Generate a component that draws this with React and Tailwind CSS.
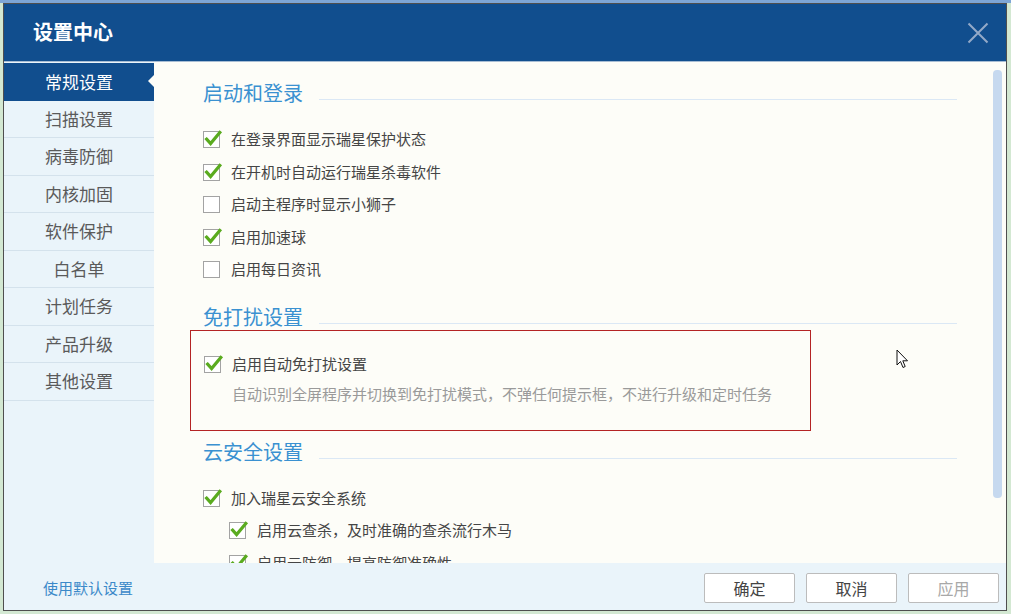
import React from "react"

const navItems = ["常规设置", "扫描设置", "病毒防御", "内核加固", "软件保护", "白名单", "计划任务", "产品升级", "其他设置"]

const CheckBox = ({ checked }) => (
    <svg width="20" height="20" viewBox="0 0 20 20" className="shrink-0 overflow-visible">
        <rect x="0.5" y="2.5" width="16" height="16" fill="#ffffff" stroke="#a3a3a3" />
        {checked && (
            <path d="M3.6 10.2 L7.6 14.6 L16.8 3.4" fill="none" stroke="#5aab1f" strokeWidth="3.2" strokeLinecap="square" />
        )}
    </svg>
)

const Row = ({ checked, label, indent }) => (
    <div className={`flex items-center h-[32.5px] ${indent ? "pl-[26px]" : ""}`}>
        <CheckBox checked={checked} />
        <span className="ml-[8px] text-[15px] leading-[20px] text-[#454545]">{label}</span>
    </div>
)

const SectionTitle = ({ children, className = "" }) => (
    <div className={`flex items-end h-[26px] ${className}`}>
        <span className="text-[20px] leading-[26px] text-[#3a91d1]">{children}</span>
        <div className="flex-1 ml-[16px] mb-[6px] border-b border-[#dbe8f5]" />
    </div>
)

const Button = ({ children, disabled }) => (
    <button
        type="button"
        className={`w-[91px] h-[30px] bg-white border border-[#bcbcbc] rounded-[2px] text-[16px] leading-[20px] ${disabled ? "text-[#a8a8a8]" : "text-[#444]"}`}
    >
        {children}
    </button>
)

export default function App() {
    return (
        <div className="relative w-[1011px] h-[614px] bg-[#d3e8d2] pl-[3px] pt-[3px] font-['Noto_Sans_CJK_SC','Noto_Sans',sans-serif] overflow-hidden">
            <div className="absolute left-0 top-0 w-[1011px] h-[3px] bg-[#7ea6d6]" />
            <div className="relative w-[1004px] h-[608px] border border-[#4f4f4f] flex flex-col bg-[#eaf4fa]">
                {/* title bar */}
                <div className="h-[57px] bg-[#114e8e] flex items-center justify-between pl-[29px] pr-[17px]">
                    <span className="text-white text-[20px] font-bold leading-[26px] mb-[1px]">设置中心</span>
                    <svg width="22" height="22" viewBox="0 0 22 22">
                        <path d="M1.5 1.5 L20.5 20.5 M20.5 1.5 L1.5 20.5" stroke="#93a9c8" strokeWidth="2" />
                    </svg>
                </div>
                <div className="h-[1px] bg-[#a7bdd4]" />

                <div className="flex flex-1 min-h-0">
                    {/* sidebar */}
                    <div className="w-[150px] flex flex-col pt-[1px] bg-[#eaf4fa]">
                        {navItems.map((item, i) =>
                            i === 0 ? (
                                <div key={item} className="relative h-[37.5px] bg-[#114e8e] flex items-center justify-center">
                                    <span className="text-[17px] leading-[22px] text-white">{item}</span>
                                    <div className="absolute right-0 top-[12px] w-0 h-0 border-y-[6px] border-y-transparent border-r-[6px] border-r-[#fdfdf8]" />
                                </div>
                            ) : (
                                <div key={item} className="h-[37.5px] border-b border-[#d4e2ec] flex items-center justify-center">
                                    <span className="text-[17px] leading-[22px] text-[#5a5a5a]">{item}</span>
                                </div>
                            )
                        )}
                        <div className="flex-1" />
                        <div className="pl-[39px] pb-[12px] text-[15px] leading-[20px] text-[#3b89c9]">使用默认设置</div>
                    </div>

                    {/* right column */}
                    <div className="flex-1 flex flex-col">
                        <div className="h-[501px] flex bg-[#fdfdf8]">
                            <div className="flex-1 overflow-hidden pl-[49px] pr-[36px] pt-[18px]">
                                <SectionTitle>启动和登录</SectionTitle>
                                <div className="mt-[17px]">
                                    <Row checked label="在登录界面显示瑞星保护状态" />
                                    <Row checked label="在开机时自动运行瑞星杀毒软件" />
                                    <Row label="启动主程序时显示小狮子" />
                                    <Row checked label="启用加速球" />
                                    <Row label="启用每日资讯" />
                                </div>
                                <SectionTitle className="mt-[18px]">免打扰设置</SectionTitle>
                                <div className="ml-[-13px] w-[621px] h-[101px] border border-[#b42424] pl-[13px] pt-[17px]">
                                    <Row checked label="启用自动免打扰设置" />
                                    <div className="pl-[28px] mt-[4px] text-[15px] leading-[20px] text-[#9a9a9a]">
                                        自动识别全屏程序并切换到免打扰模式，不弹任何提示框，不进行升级和定时任务
                                    </div>
                                </div>
                                <SectionTitle className="mt-[8px]">云安全设置</SectionTitle>
                                <div className="mt-[17px]">
                                    <Row checked label="加入瑞星云安全系统" />
                                    <Row checked indent label="启用云查杀，及时准确的查杀流行木马" />
                                    <Row checked indent label="启用云防御，提高防御准确性" />
                                </div>
                            </div>
                            <div className="w-[9px] mr-[4px] mt-[8px] h-[428px] rounded-[4px] bg-[#c6d9ef]" />
                        </div>

                        {/* footer */}
                        <div className="flex-1 flex justify-end items-start gap-[11px] pr-[7px] pt-[10px] bg-[#eaf4fa]">
                            <Button>确定</Button>
                            <Button>取消</Button>
                            <Button disabled>应用</Button>
                        </div>
                    </div>
                </div>
            </div>

            {/* mouse pointer */}
            <svg className="absolute left-[896px] top-[349px]" width="14" height="22" viewBox="0 0 14 22">
                <path d="M1 1 L1 16 L4.5 12.5 L7 18.5 L9.2 17.5 L6.8 11.8 L11.5 11.8 Z" fill="#ffffff" stroke="#111" strokeWidth="1" strokeLinejoin="round" />
            </svg>
        </div>
    )
}
